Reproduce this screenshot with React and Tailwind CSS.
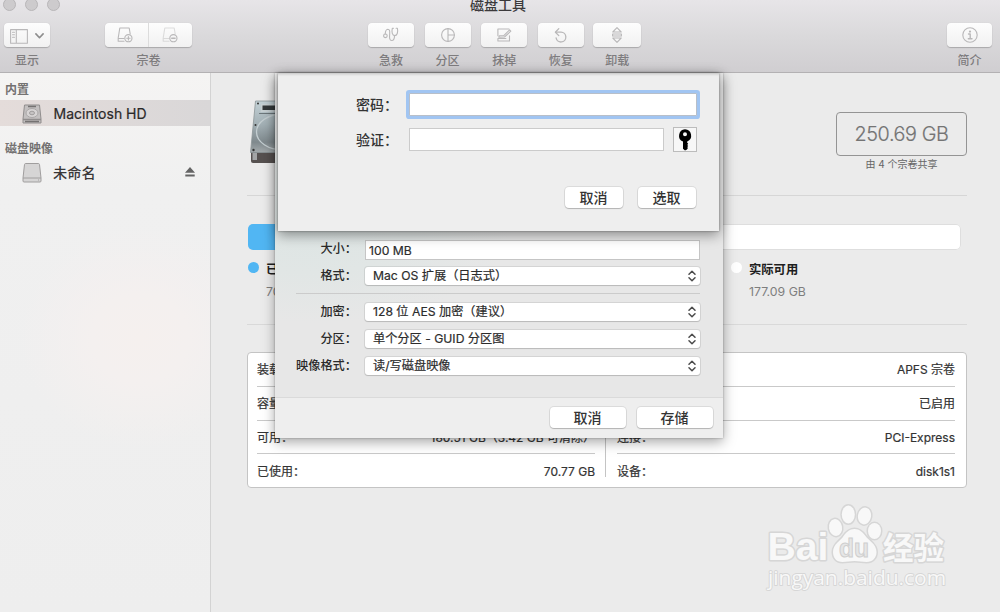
import React from "react";

function IconButton({ label, width, children }) {
  return (
    <div className="flex flex-col items-center">
      <div
        className={`flex h-6 items-center justify-center rounded-[4px] bg-gradient-to-b from-[#fdfdfd] to-[#f1f1f1] text-[#b9b8b9] shadow-[0_1px_1px_rgba(0,0,0,0.2),0_0_1px_rgba(0,0,0,0.15)] ${width}`}
      >
        {children}
      </div>
      <span className="mt-[5px] h-[18px] text-[12px] leading-[18px] font-medium whitespace-nowrap text-[#7e7c7e]">{label}</span>
    </div>
  );
}

function Svg({ w = 18, h = 18, children, className = "" }) {
  return (
    <svg
      width={w}
      height={h}
      viewBox={`0 0 ${w} ${h}`}
      fill="none"
      stroke="currentColor"
      strokeWidth="1.1"
      strokeLinecap="round"
      strokeLinejoin="round"
      className={className}
    >
      {children}
    </svg>
  );
}

function Toolbar() {
  return (
    <header className="flex h-[73px] shrink-0 flex-col border-b border-[#b3b1b3] bg-gradient-to-b from-[#e7e5e8] via-[#dad9db] to-[#d0ced1]">
      <div className="flex h-[23px] items-start">
        <div className="-mt-[2px] flex w-[211px] gap-[9px] pl-[3px]">
          {[0, 1, 2].map((i) => (
            <span key={i} className="size-[13px] rounded-full border border-[#b8b6b8] bg-[#cdcbcd]" />
          ))}
        </div>
        <h1 className="-mt-[6px] ml-[259px] h-5 text-[14px] leading-[22px] font-medium text-[#3c3a3c]">磁盘工具</h1>
      </div>
      <div className="flex items-start pl-1">
        <IconButton label="显示" width="w-[46px]">
          <div className="flex items-center gap-[7px] pt-[2px]">
            <Svg w={18} h={15}>
              <path d="M.6.6h16.8v13.6H.6zM6.3.6v13.6" />
              <path d="M2.500 3.300h2M2.500 5.800h2M2.500 8.300h2" />
            </Svg>
            <Svg w={9} h={6} className="text-[#8d8d8d]">
              <path d="M.9.9l3.600 3.800L8.100.9" strokeWidth="1.600" />
            </Svg>
          </div>
        </IconButton>
        <div className="ml-[55px]">
          <IconButton label="宗卷" width="w-[87px]">
            <div className="flex h-6 w-[43px] items-center justify-center border-r border-[#dcdcdc] pr-[3px]">
              <Svg w={16} h={16}>
                <path d="M7 14.200H1.200V11L2.800 1h9.400l1 6M1.200 11.500H7" />
                <circle cx="11.400" cy="11.200" r="3.600" />
                <path d="M9.700 11.200h3.400M11.400 9.500v3.400" />
              </Svg>
            </div>
            <div className="flex h-6 w-[43px] items-center justify-center">
              <Svg w={16} h={16}>
                <path d="M7 14.200H1.200V11L2.800 1h9.400l1 6M1.200 11.500H7" opacity=".45" />
                <circle cx="11.400" cy="11.200" r="3.600" />
                <path d="M9.700 11.200h3.400" strokeWidth="1.400" />
              </Svg>
            </div>
          </IconButton>
        </div>
        <div className="ml-[176px] flex gap-[10.600px]">
          <IconButton label="急救" width="w-[46px]">
            <Svg>
              <circle cx="3.400" cy="9.800" r="1.800" />
              <path d="M3.200 8C3.400 5 4 3.300 5.700 3.200c2 0 2.200 1.600 2 4.600-.3 3.700-.4 6.700 2.100 6.700 2 0 2.700-2 2.700-4.700" />
              <path d="M11.500 2.300H10.300C9.400 6.300 10.300 9.600 12.700 9.600S16.300 6.300 15.400 2.300h-1.300" />
            </Svg>
          </IconButton>
          <IconButton label="分区" width="w-[46px]">
            <Svg>
              <circle cx="9" cy="9" r="6.400" />
              <path d="M9 2.600v12.800M9 9h6.400" />
            </Svg>
          </IconButton>
          <IconButton label="抹掉" width="w-[46px]">
            <Svg>
              <path d="M14 3H2.900v6.700M14.500 9.800v5.200H2.900v-2.500h8" />
              <path d="M4.300 9.800h4.200l6.100-6 1.200 1.400-6.300 5.800-5.700.2z" />
            </Svg>
          </IconButton>
          <IconButton label="恢复" width="w-[46px]">
            <Svg>
              <path d="M3.700 6.200H9a4.900 4.900 0 1 1-4.900 5.700" strokeWidth="1.300" />
              <path d="M6.800 2.600L3.400 6.200l3.400 3.400" strokeWidth="1.300" />
            </Svg>
          </IconButton>
          <div className="-ml-[1px]">
            <IconButton label="卸载" width="w-[48px]">
              <Svg>
                <path d="M4.800 6L9 1.700 13.200 6zM4.800 12L9 16.300l4.200-4.300zM4.600 8h8.800v2H4.600z" />
              </Svg>
            </IconButton>
          </div>
        </div>
        <div className="mr-2 ml-auto">
          <IconButton label="简介" width="w-[45px]">
            <Svg>
              <circle cx="9" cy="9" r="7.200" />
              <circle cx="9" cy="5.600" r=".6" fill="currentColor" />
              <path d="M7.500 8h1.700v4.700M7.300 12.700h3.700" strokeWidth="1.400" />
            </Svg>
          </IconButton>
        </div>
      </div>
    </header>
  );
}

function Sidebar() {
  return (
    <aside className="flex w-[211px] shrink-0 flex-col border-r border-[#d3d3d3] bg-[radial-gradient(ellipse_120px_110px_at_140px_265px,#f5f0ee_0%,#f4f0ef_40%,transparent_100%),linear-gradient(180deg,#f5f4f3_0%,#f0f0f0_22%,#eeeeee_100%)]">
      <p className="mt-[7px] h-5 pl-[5px] text-[12px] leading-[20px] font-bold text-[#747272]">内置</p>
      <div className="flex h-[26px] items-center bg-gradient-to-r from-[#e4dcda] to-[#d9d7d8] pl-[22px]">
        <svg width="20" height="20" viewBox="0 0 20 20" fill="none" stroke="#908d8d" className="mt-[2px]">
          <path d="M2.500 1h15l1.500 14v4H1v-4z" fill="#c3c0c0" />
          <path d="M1 15.500h18" strokeWidth="1.500" />
          <ellipse cx="10" cy="9" rx="6" ry="4.500" fill="#d7d4d4" stroke="#aaa7a7" />
          <ellipse cx="10" cy="9" rx="2.500" ry="1.800" fill="#c6c3c3" stroke="#a09d9d" />
          <path d="M6 2.500h8M3 17.500h14" stroke="#757272" strokeWidth="1.500" />
        </svg>
        <span className="ml-[11.500px] pt-[2px] text-[14px] leading-[24px] text-[#2b2929] [-webkit-text-stroke:0.2px_#2b2929]">Macintosh HD</span>
      </div>
      <p className="mt-[12px] h-5 pl-[5px] text-[12px] leading-[22px] font-bold text-[#747272]">磁盘映像</p>
      <div className="mt-[2px] flex h-[26px] items-center pr-[15px] pl-[22px]">
        <svg width="20" height="20" viewBox="0 0 20 20" fill="none" stroke="#a09e9e">
          <path d="M2.500 1.500q.2-1 1.200-1h12.600q1 0 1.200 1L19 15v3q0 1-1 1H2q-1 0-1-1v-3z" fill="#d6d5d5" />
          <path d="M1 15h18" />
          <path d="M16 17h1" />
        </svg>
        <span className="ml-[11px] text-[14.200px] leading-[26px] font-medium text-[#3a3838]">未命名</span>
        <svg width="10" height="10" viewBox="0 0 10 10" className="mb-[2px] ml-auto" fill="#646464">
          <path d="M5 0l5 5.800H0zM.3 7.600h9.400v1.900H.3z" />
        </svg>
      </div>
    </aside>
  );
}

const leftRows = [
  ["装载点：", "/"],
  ["容量：", "250.69 GB"],
  ["可用：", "180.51 GB（3.42 GB 可清除）"],
  ["已使用：", "70.77 GB"],
];
const rightRows = [
  ["类型：", "APFS 宗卷"],
  ["所有者：", "已启用"],
  ["连接：", "PCI-Express"],
  ["设备：", "disk1s1"],
];

function InfoColumn({ rows }) {
  return (
    <dl className="w-[338px] divide-y divide-[#c9c9c9] text-[12px] text-[#333] [-webkit-text-stroke:0.2px_#333]">
      {rows.map(([k, v]) => (
        <div key={k} className="flex h-[33.800px] items-center justify-between pt-[2px]">
          <dt>{k}</dt>
          <dd className="whitespace-nowrap">{v}</dd>
        </div>
      ))}
    </dl>
  );
}

function Drive() {
  return (
    <svg width="66" height="64" viewBox="0 0 66 64">
      <defs>
        <linearGradient id="plate" x1="0" y1="0" x2="0" y2="1">
          <stop offset="0" stopColor="#c3d1d6" />
          <stop offset=".45" stopColor="#a3b0b5" />
          <stop offset=".8" stopColor="#7f898d" />
          <stop offset="1" stopColor="#a4aaac" />
        </linearGradient>
      </defs>
      <path d="M1 52h64v9q0 2-2 2H3q-2 0-2-2z" fill="#565150" />
      <path d="M2.500 53h4.500v7H2.500z" fill="#a3a5a6" />
      <path d="M5.500 1h55l5 51.500H.5z" fill="url(#plate)" stroke="#8b9497" strokeWidth=".8" />
      <path d="M11 4h44v8H10.500z" fill="#c7d0d3" />
      <path d="M12.500 5.500h41v4.500h-41z" fill="#34393b" />
      <path d="M9 13.500h48" stroke="#6d777b" />
      <ellipse cx="33" cy="32" rx="26.500" ry="18" fill="none" stroke="#c4ced1" strokeWidth="1.300" />
      <circle cx="8" cy="3.500" r="1" fill="#333" />
      <circle cx="5.500" cy="25" r="1" fill="#333" />
      <circle cx="3.500" cy="50" r="1.200" fill="#333" />
    </svg>
  );
}

function Legend({ dot, title, value }) {
  return (
    <div className="flex gap-[7px]">
      <span className={`mt-[4px] size-[11px] rounded-full ${dot}`} />
      <div className="text-[12.300px] leading-[22px]">
        <p className="pt-px font-bold text-[#1e1e1e]">{title}</p>
        <p className="text-[#7e7e7e]">{value}</p>
      </div>
    </div>
  );
}

function Main() {
  return (
    <main className="flex w-[789px] flex-col bg-[#ebebeb] pl-9">
      <div className="flex h-[123px] w-[720px] justify-between border-b border-[#d6d6d6] pt-[27px] pl-[3px]">
        <Drive />
        <div className="mt-3 flex w-[131px] flex-col items-center">
          <div className="flex h-[44px] w-full items-center justify-center rounded-[4px] border-[1.500px] border-[#949494] pt-[2px] text-[19.800px] font-light tracking-[-0.400px] text-[#747474] [-webkit-text-stroke:0.2px_#747474]">
            250.69 GB
          </div>
          <span className="text-[10px] leading-[16px] text-[#666]">由 4 个宗卷共享</span>
        </div>
      </div>
      <div className="mt-[28px] ml-px flex h-[26px] w-[713px] rounded-[5px] bg-white shadow-[inset_0_0_0_1px_#dedede]">
        <div className="w-[200px] rounded-l-[5px] bg-[#51b6f3]" />
      </div>
      <div className="mt-[8px] ml-px flex h-[66px] w-[719px] justify-between">
        <Legend dot="bg-[#51b6f3]" title="已使用" value="70.77 GB" />
        <div className="w-[236px]">
          <Legend dot="bg-white" title="实际可用" value="177.09 GB" />
        </div>
      </div>
      <div className="w-[720px] border-t border-[#d9d9d9]" />
      <section className="mt-[27px] flex h-[136px] w-[720px] rounded-[4px] border border-[#c4c4c4] bg-white pl-[9px]">
        <InfoColumn rows={leftRows} />
        <div className="mt-[10px] mr-[11px] ml-[10px] h-[114px] w-px bg-[#c4c4c4]" />
        <InfoColumn rows={rightRows} />
      </section>
    </main>
  );
}

function Button({ children, className }) {
  return (
    <button
      className={`flex items-center justify-center rounded-[4px] bg-white pr-px pb-px text-[14px] font-medium text-[#333] shadow-[0_0_0_1px_rgba(0,0,0,0.08),0_1px_1px_rgba(0,0,0,0.18)] ${className}`}
    >
      {children}
    </button>
  );
}

function SelectRow({ label, value }) {
  return (
    <div className="flex h-[27px] items-center">
      <span className="w-[82px] pt-px text-right text-[12.200px] font-medium whitespace-nowrap text-[#2a2a2a]">{label}：</span>
      <div className="ml-[8px] flex h-[18px] w-[335px] items-center justify-between rounded-[3px] bg-white pr-1 pl-2 text-[12.200px] text-[#2c2c2c] shadow-[0_0_0_1px_rgba(0,0,0,0.08),0_1px_1px_rgba(0,0,0,0.13)] [-webkit-text-stroke:0.2px_#2c2c2c]">
        <span className="pt-[2px]">{value}</span>
        <svg width="8" height="12" viewBox="0 0 8 12" fill="none" stroke="#4c4c4c" strokeWidth="1.500" strokeLinecap="round" strokeLinejoin="round">
          <path d="M1 4.300l3-3 3 3M1 7.700l3 3 3-3" />
        </svg>
      </div>
    </div>
  );
}

function ImageSheet() {
  return (
    <div className="absolute top-[73px] left-[275px] flex h-[365px] w-[448px] flex-col bg-[radial-gradient(ellipse_200px_100px_at_40px_150px,#dde5e4_0%,#e1e6e5_50%,#e7e7e7_100%)] shadow-[0_4px_12px_rgba(0,0,0,0.35),0_0_2px_rgba(0,0,0,0.3)]">
      <div className="mt-[164px] flex h-[26px] items-center">
        <span className="w-[82px] pb-[2px] text-right text-[12.200px] font-medium whitespace-nowrap text-[#2a2a2a]">大小：</span>
        <div className="ml-[8px] flex h-[20px] w-[335px] items-center border border-[#c5c5c5] bg-white pt-[2px] pl-[3px] text-[12.200px] text-[#2c2c2c] [-webkit-text-stroke:0.2px_#2c2c2c]">100 MB</div>
      </div>
      <div className="-mt-px">
        <SelectRow label="格式" value="Mac OS 扩展（日志式）" />
      </div>
      <div className="mt-1 ml-[21px] h-px w-[404px] bg-[#cbcbcb]" />
      <div className="mt-1">
        <SelectRow label="加密" value="128 位 AES 加密（建议）" />
        <SelectRow label="分区" value="单个分区 - GUID 分区图" />
        <SelectRow label="映像格式" value="读/写磁盘映像" />
      </div>
      <div className="mt-auto flex h-[41px] justify-end gap-[11px] border-t border-[#dadada] bg-[#eeeeee] pt-[9px] pr-[10px]">
        <Button className="h-[21px] w-[76px]">取消</Button>
        <Button className="h-[21px] w-[76px]">存储</Button>
      </div>
    </div>
  );
}

function PasswordSheet() {
  return (
    <div className="absolute top-[73px] left-[278px] flex h-[158px] w-[441px] flex-col bg-[#eeeeee] text-[14px] font-medium text-[#333] shadow-[0_4px_12px_rgba(0,0,0,0.4),0_0_2px_rgba(0,0,0,0.4),inset_0_3px_3px_-2px_rgba(0,0,0,0.2)]">
      <div className="mt-[20px] flex h-[23px] items-center">
        <span className="w-[120px] text-right">密码：</span>
        <div className="ml-[11px] h-[23px] w-[288px] rounded-[1px] border border-[#b8bfc9] bg-white shadow-[0_0_0_3px_#a1c5f2]" />
      </div>
      <div className="mt-[11px] flex h-[25px] items-center">
        <span className="w-[120px] pb-px text-right">验证：</span>
        <div className="ml-[11px] h-[23px] w-[255px] border border-[#cbcbcb] bg-white" />
        <div className="ml-[9px] flex h-[25px] w-6 items-center justify-center border border-[#bcbcbc] bg-[#f7f7f7]">
          <svg width="14" height="22" viewBox="0 0 14 22">
            <path
              fillRule="evenodd"
              fill="#000"
              d="M7 .3a6.400 6.400 0 0 1 2.200 12.300v1.200l1 1-1 1.100 1 1-1 1.200.7 1-.9 1.400L7 21.600l-2-1.800v-7.200A6.400 6.400 0 0 1 7 .3zm0 3a2 2 0 1 0 0 4 2 2 0 0 0 0-4z"
            />
          </svg>
        </div>
      </div>
      <div className="mt-[35px] mr-[23px] flex justify-end gap-[15px]">
        <Button className="h-[21px] w-[58px]">取消</Button>
        <Button className="h-[21px] w-[58px]">选取</Button>
      </div>
    </div>
  );
}

function Watermark() {
  return (
    <svg className="absolute top-[500px] left-[762px]" width="190" height="95" viewBox="0 0 190 95">
      <g fill="#f8f8f8" stroke="#d6d6d6" strokeWidth="3" paintOrder="stroke" strokeLinejoin="round">
        <text x="5.500" y="60" fontFamily="Liberation Sans" fontWeight="700" fontSize="39" textLength="61" lengthAdjust="spacingAndGlyphs">Bai</text>
        <text x="121" y="59" fontFamily="Noto Sans CJK SC" fontWeight="700" fontSize="31" textLength="61" lengthAdjust="spacingAndGlyphs">经验</text>
        <ellipse cx="73.500" cy="27.500" rx="6.500" ry="8.500" transform="rotate(-10 73.500 27.500)" />
        <ellipse cx="86.300" cy="14.500" rx="6.500" ry="9" />
        <ellipse cx="102.500" cy="16" rx="6.500" ry="8.500" transform="rotate(10 102.500 16)" />
        <ellipse cx="112.500" cy="31" rx="6.500" ry="8" />
        <path d="M92.500 29c5 0 8.500 3.500 11 7 3 4.500 11 8 11 16 0 6-4 10-10 10-4 0-7.500-1-12-1s-8 1-12 1c-6 0-9.500-4-9.500-10 0-8 8-11.500 10.500-16 2.500-3.500 6-7 11-7z" />
        <text x="6" y="85" fontFamily="Open Sans" fontSize="20" textLength="178" lengthAdjust="spacingAndGlyphs" strokeWidth="1.800">jingyan.baidu.com</text>
      </g>
      <text x="77" y="57" fontFamily="Liberation Sans" fontWeight="700" fontSize="25" textLength="30" lengthAdjust="spacingAndGlyphs" fill="#e6e6e6" stroke="#cfcfcf" strokeWidth="1">du</text>
    </svg>
  );
}

export default function App() {
  return (
    <div className="relative flex h-[612px] w-[1000px] flex-col overflow-hidden bg-[#ebebeb] font-[Inter,'Noto_Sans_CJK_SC',sans-serif]">
      <Toolbar />
      <div className="flex flex-1">
        <Sidebar />
        <Main />
      </div>
      <ImageSheet />
      <PasswordSheet />
      <Watermark />
    </div>
  );
}
